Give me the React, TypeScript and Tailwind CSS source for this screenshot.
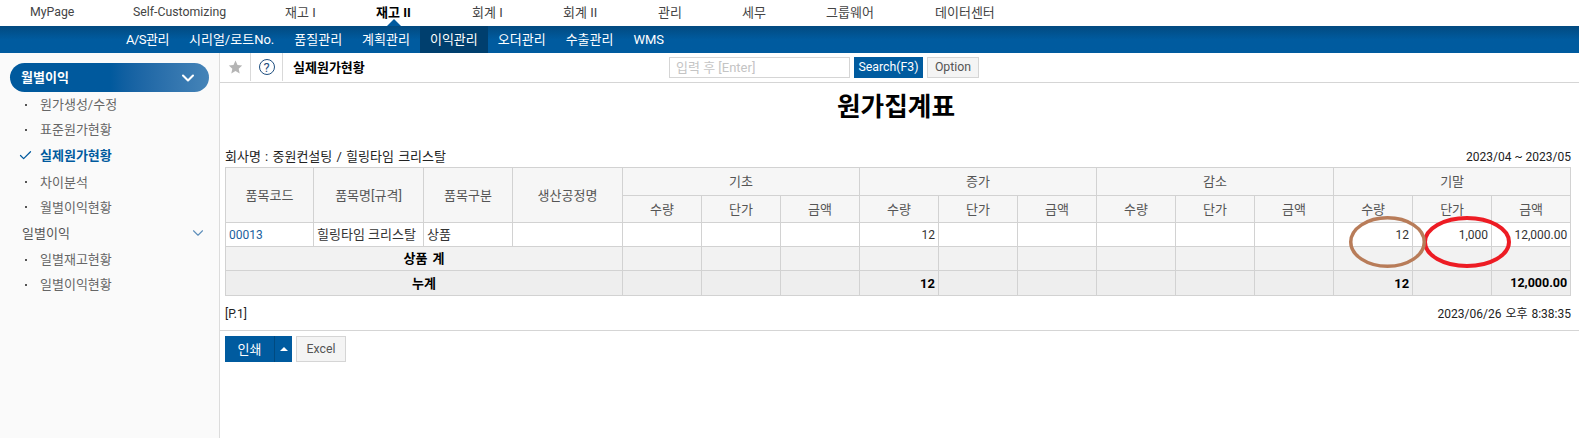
import React from "react";
import { ChevronDown, Check } from "lucide-react";

const F = { fontFamily: 'Roboto,"Noto Sans CJK KR","Noto Sans",sans-serif' };
const top: [string, string][] = [["MyPage", "w-[103px] text-[12.3px]"], ["Self-Customizing", "w-[152px] text-[12.3px]"], ["재고 I", "w-[91px]"], ["재고 II", "w-[96px]"], ["회계 I", "w-[91px]"], ["회계 II", "w-[95px]"], ["관리", "w-[84px]"], ["세무", "w-[84px]"], ["그룹웨어", "w-[109px]"], ["데이터센터", "w-[118px]"]];
const sub = ["A/S관리", "시리얼/로트No.", "품질관리", "계획관리", "이익관리", "오더관리", "수출관리", "WMS"];
const th = "border border-[#d2d2d2] bg-[#f6f6f6] font-normal text-[#555] text-center p-0";
const td = "border border-[#d2d2d2] px-[3px] p-0 text-right text-[#333]";
const num = `${td} text-[12px] whitespace-nowrap`;
const sm = "border border-[#d2d2d2] bg-[#f2f2f2] p-0 px-[3px] text-right";
const tt = "border border-[#d2d2d2] bg-[#eeeeee] p-0 px-[3px] text-right font-bold text-black";

function SideItem({ label, active }: { label: string; active?: boolean }) {
  return (
    <div className={`h-[25.3px] flex items-center pl-[19px] ${active ? "text-[#005a9e] font-bold mb-[1.5px]" : "text-[#666]"}`}>
      <span className="w-[21px] flex items-center">
        {active ? <Check size={15} strokeWidth={2} className="text-[#005a9e] -ml-[1px]" /> : <span className="block w-[2px] h-[2px] ml-[6px] bg-[#555]" />}
      </span>
      {label}
    </div>
  );
}

function Blank({ n, cls }: { n: number; cls: string }) {
  return <>{Array.from({ length: n }).map((_, i) => <td key={i} className={cls} />)}</>;
}

export default function App() {
  return (
    <div style={F} className="w-[1579px] h-[438px] overflow-hidden bg-white text-[13px] leading-none text-[#333]">
      <div className="relative h-[26px] flex items-center bg-white pb-[2px]">
        {top.map(([t, w]) => (
          <span key={t} className={`${w} pl-[30px] whitespace-nowrap ${t === "재고 II" ? "text-black font-bold" : "text-[#444]"}`}>{t}</span>
        ))}
        <span className="absolute left-[387px] top-[19px] w-0 h-0 border-x-[7px] border-x-transparent border-b-[7px] border-b-[#015a9e]" />
      </div>
      <div className="h-[27px] flex pl-[116px] bg-gradient-to-b from-[#024a80] via-[#005b9f] to-[#005b9f] text-white">
        {sub.map((s) => (
          <span key={s} className={`h-full flex items-center px-[10px] whitespace-nowrap ${s === "이익관리" ? "bg-[#003f6e]" : ""} ${s === "A/S관리" ? "tracking-[-0.5px]" : ""}`}>{s}</span>
        ))}
      </div>
      <div className="flex h-[385px]">
        <aside className="w-[220px] shrink-0 h-full bg-[#fafafa] border-r border-[#dcdcdc] pt-[10px]">
          <div className="ml-[10px] w-[199px] h-[29px] rounded-full bg-gradient-to-r from-[#00599d] via-[#00599d] to-[#4584b8] flex items-center justify-between px-[11px] text-white font-bold">
            <span>월별이익</span>
            <ChevronDown size={20} strokeWidth={2.5} className="text-white" />
          </div>
          <div>
            <SideItem label="원가생성/수정" />
            <SideItem label="표준원가현황" />
            <SideItem label="실제원가현황" active />
            <SideItem label="차이분석" />
            <SideItem label="월별이익현황" />
            <div className="h-[27px] flex items-center justify-between pl-[22px] pr-[12px] text-[#555]">
              <span>일별이익</span>
              <ChevronDown size={18} strokeWidth={1.5} className="text-[#5f8fbb]" />
            </div>
            <SideItem label="일별재고현황" />
            <SideItem label="일별이익현황" />
          </div>
        </aside>
        <main className="flex-1 min-w-0">
          <div className="h-[30px] flex items-center border-b border-[#d5d5d5]">
            <div className="w-[31px] h-[28px] mb-[1px] flex items-center justify-center border-r border-[#d9d9d9]">
              <svg width="15" height="14" viewBox="0 0 24 23"><path d="M12 1l3.3 7.3 7.7.8-5.8 5.2 1.7 7.7L12 18l-6.9 4 1.7-7.7L1 9.1l7.7-.8z" fill="#b5b5b5" /></svg>
            </div>
            <div className="w-[32px] h-[28px] mb-[1px] flex items-center justify-center border-r border-[#d9d9d9]">
              <span className="w-[16px] h-[16px] rounded-full border border-[#1f4f80] flex items-center justify-center text-[13px] text-[#1f4f80]">?</span>
            </div>
            <span className="ml-[10px] w-[376px] font-bold text-black">실제원가현황</span>
            <div className="w-[181px] h-[21px] border border-[#d5d5d5] flex items-center pl-[6px] text-[#c4c4c4]">입력 후 [Enter]</div>
            <div className="ml-[4px] w-[69px] h-[21px] bg-[#005b9f] text-white text-[12.3px] flex items-center justify-center">Search(F3)</div>
            <div className="ml-[4px] w-[52px] h-[21px] bg-[#f4f4f4] border border-[#d5d5d5] text-[#555] text-[12.3px] flex items-center justify-center">Option</div>
          </div>
          <h1 className="h-[56px] pt-[8px] text-center text-[25.7px] leading-[32px] font-bold text-black w-[1352px]">원가집계표</h1>
          <div className="pl-[5px] pr-[8px] flex justify-between items-end h-[28px] pb-[4px] text-[#222]">
            <span className="[word-spacing:1px]">회사명 : 중원컨설팅 / 힐링타임 크리스탈</span>
            <span className="text-[12px]">2023/04 ~ 2023/05</span>
          </div>
          <div className="relative pl-[5px]">
            <table className="table-fixed border-collapse w-[1346px] border-t border-t-[#9fb6c8]">
              <colgroup>
                <col className="w-[88px]" /><col className="w-[110px]" /><col className="w-[89px]" /><col className="w-[110px]" />
                {Array.from({ length: 12 }).map((_, i) => <col key={i} className="w-[79px]" />)}
              </colgroup>
              <thead>
                <tr className="h-[28px]">
                  {["품목코드", "품목명[규격]", "품목구분", "생산공정명"].map((h) => <th key={h} rowSpan={2} className={th}>{h}</th>)}
                  {["기초", "증가", "감소", "기말"].map((h) => <th key={h} colSpan={3} className={th}>{h}</th>)}
                </tr>
                <tr className="h-[27px]">
                  {Array.from({ length: 4 }).flatMap((_, g) => ["수량", "단가", "금액"].map((h) => <th key={g + h} className={th}>{h}</th>))}
                </tr>
              </thead>
              <tbody>
                <tr className="h-[24px]">
                  <td className={`${td} !text-left !text-[#1b5f9e] text-[12px]`}>00013</td>
                  <td className={`${td} !text-left whitespace-nowrap`}>힐링타임 크리스탈</td>
                  <td className={`${td} !text-left`}>상품</td>
                  <Blank n={4} cls={td} />
                  <td className={num}>12</td>
                  <Blank n={5} cls={td} />
                  <td className={num}>12</td>
                  <td className={num}>1,000</td>
                  <td className={num}>12,000.00</td>
                </tr>
                <tr className="h-[24px]">
                  <td colSpan={4} className={`${sm} !text-center font-bold text-black [word-spacing:2px]`}>상품 계</td>
                  <Blank n={12} cls={sm} />
                </tr>
                <tr className="h-[25px]">
                  <td colSpan={4} className={`${tt} !text-center`}>누계</td>
                  <Blank n={3} cls={tt} />
                  <td className={tt}>12</td>
                  <Blank n={5} cls={tt} />
                  <td className={tt}>12</td>
                  <td className={tt} />
                  <td className={`${tt} text-[12.5px] whitespace-nowrap`}>12,000.00</td>
                </tr>
              </tbody>
            </table>
            <svg className="absolute left-[1128px] top-[48px] pointer-events-none" width="165" height="56" viewBox="0 0 165 56" fill="none">
              <ellipse cx="119" cy="27" rx="42" ry="24" stroke="#ed1c24" strokeWidth="4" />
              <ellipse cx="39.5" cy="27" rx="36.75" ry="24.25" stroke="#b87c59" strokeWidth="3.5" />
            </svg>
          </div>
          <div className="pl-[5px] pr-[8px] mt-[12px] h-[22px] flex justify-between text-[#222] text-[12px]">
            <span>[P.1]</span>
            <span className="[word-spacing:1px]">2023/06/26 오후 8:38:35</span>
          </div>
          <div className="border-t border-[#d5d5d5] pl-[5px] pt-[5px] flex">
            <div className="flex h-[26px] bg-[#005b9f] text-white items-center">
              <span className="w-[49px] text-center">인쇄</span>
              <span className="w-[18px] h-full border-l border-[#004a80] flex items-center justify-center">
                <span className="w-0 h-0 border-x-[4px] border-x-transparent border-b-[4px] border-b-white" />
              </span>
            </div>
            <div className="ml-[4px] w-[50px] h-[26px] bg-[#f4f4f4] border border-[#d5d5d5] text-[#555] text-[12.3px] flex items-center justify-center">Excel</div>
          </div>
        </main>
      </div>
    </div>
  );
}
